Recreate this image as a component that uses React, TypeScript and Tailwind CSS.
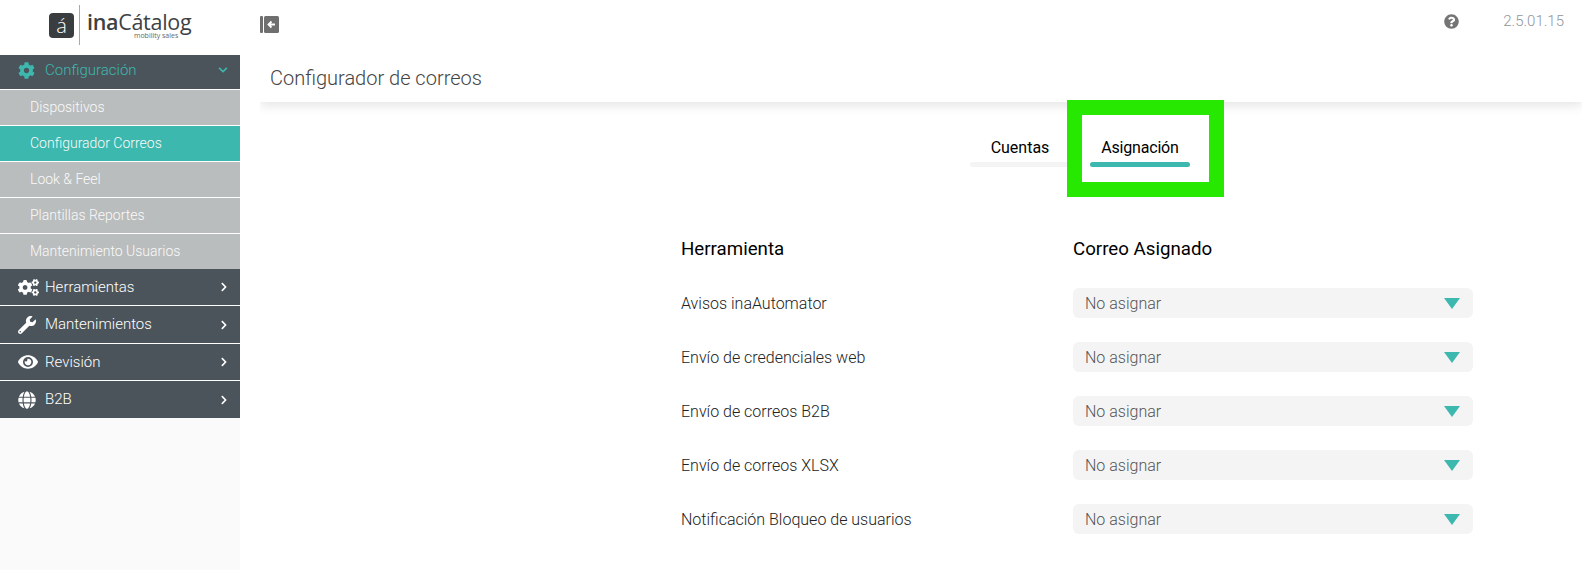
import { FaChevronDown, FaChevronRight, FaCog, FaCogs, FaEye, FaGlobe, FaQuestionCircle, FaWrench } from 'react-icons/fa';

const subItems = ['Dispositivos', 'Configurador Correos', 'Look & Feel', 'Plantillas Reportes', 'Mantenimiento Usuarios'];

const menuItems = [
    { label: 'Herramientas', icon: FaCogs, height: 'h-[36px]', iconSize: 'text-[21px]' },
    { label: 'Mantenimientos', icon: FaWrench, height: 'h-[38px]', iconSize: 'text-[18px]' },
    { label: 'Revisión', icon: FaEye, height: 'h-[37px]', iconSize: 'text-[20px]' },
    { label: 'B2B', icon: FaGlobe, height: 'h-[38px]', iconSize: 'text-[18px]' },
];

const rows = ['Avisos inaAutomator', 'Envío de credenciales web', 'Envío de correos B2B', 'Envío de correos XLSX', 'Notificación Bloqueo de usuarios'];

function Logo() {
    return (
        <div className="h-[55px] bg-white flex items-center pl-[49px] pb-[5px]">
            <div className="w-[25px] h-[25px] mt-[1px] rounded-[4px] bg-[#3a3d3f] text-white flex items-center justify-center text-[20px] font-light font-['Open_Sans',sans-serif]">
                á
            </div>
            <div className="w-px h-[40px] bg-[#a9a9a9] ml-[5px] mr-[7px]" />
            <div className="flex flex-col items-end">
                <div className="text-[#3d4143] text-[21.5px] h-[21px] leading-[21px] tracking-[-0.3px] font-['Open_Sans',sans-serif]">
                    <span className="font-semibold">ina</span>
                    <span>Cátalog</span>
                </div>
                <div className="text-[7px] h-[6px] leading-[6px] text-[#666] mt-[1px] mr-[13px] font-['Open_Sans',sans-serif]">mobility sales</div>
            </div>
        </div>
    );
}

function Sidebar() {
    return (
        <aside className="w-[240px] shrink-0 bg-[#fafafa] min-h-[570px]">
            <Logo />
            <div className="h-[34px] pb-[4px] bg-[#4c545b] text-[#3cb8ae] flex items-center pl-[18px] pr-[12px] text-[15px] font-light">
                <FaCog className="text-[17px] mr-[10px]" />
                <span className="flex-1">Configuración</span>
                <FaChevronDown className="text-[10px]" />
            </div>
            {subItems.map((item, i) => (
                <div
                    key={item}
                    className={`h-[36px] border-t border-white flex items-center pl-[30px] text-[14px] font-light text-[#fafafa] ${i === 1 ? 'bg-[#3cb8ae]' : 'bg-[#babdbd]'}`}
                >
                    {item}
                </div>
            ))}
            <div>
                {menuItems.map((item, i) => {
                    const Icon = item.icon;
                    return (
                        <div
                            key={item.label}
                            className={`${item.height} bg-[#4c545b] text-white flex items-center pr-[11px] text-[15px] font-light ${i > 0 ? 'border-t border-white' : ''}`}
                        >
                            <div className="w-[45px] pl-[18px] flex items-center">
                                <Icon className={item.iconSize} />
                            </div>
                            <span className="flex-1">{item.label}</span>
                            <FaChevronRight className="text-[10px]" />
                        </div>
                    );
                })}
            </div>
        </aside>
    );
}

function ToggleIcon() {
    return (
        <svg width="19" height="19" viewBox="0 0 19 19" className="text-[#6f6f6f]">
            <rect x="0" y="1" width="3" height="17" rx="1" fill="currentColor" />
            <rect x="4" y="1" width="15" height="17" rx="1.5" fill="currentColor" />
            <path d="M15 9.5H8.5M11.5 6.5l-3 3 3 3" stroke="#fff" strokeWidth="1.8" fill="none" />
        </svg>
    );
}

function SelectBox() {
    return (
        <div className="w-[400px] h-[30px] rounded-[6px] bg-[#f4f4f4] flex items-center justify-between pl-[12px] pr-[13px] text-[16px] font-light text-[#555]">
            <span className="pt-[2px]">No asignar</span>
            <div className="w-0 h-0 border-l-[8px] border-r-[8px] border-t-[11px] border-l-transparent border-r-transparent border-t-[#3cb8ae]" />
        </div>
    );
}

export default function App() {
    return (
        <div className="flex h-[570px] overflow-hidden bg-white font-['Roboto',sans-serif]">
            <Sidebar />
            <main className="flex-1 min-w-0">
                <div className="ml-[20px] h-[102px] [clip-path:inset(0_0_-20px_0)] shadow-[0_4px_10px_rgba(0,0,0,0.1)]">
                    <div className="h-[55px] flex items-start justify-between">
                        <div className="mt-[15px]">
                            <ToggleIcon />
                        </div>
                        <div className="flex items-center mt-[10px] pr-[18px]">
                            <FaQuestionCircle className="text-[15px] text-[#757575] mr-[44px]" />
                            <span className="text-[15px] font-light text-[#8f959b]">2.5.01.15</span>
                        </div>
                    </div>
                    <h1 className="pl-[10px] text-[20px] leading-[46px] font-light text-[#444]">Configurador de correos</h1>
                </div>

                <div className="relative ml-[730px] mt-[31px] w-[220px] flex gap-[20px] text-[16px] text-black">
                    <div className="w-[100px] text-center">
                        <div className="h-[29px] leading-[29px]">Cuentas</div>
                        <div className="h-[5px] rounded-full bg-[#f4f4f4]" />
                    </div>
                    <div className="w-[100px] text-center">
                        <div className="h-[29px] leading-[29px] tracking-[-0.2px]">Asignación</div>
                        <div className="h-[5px] rounded-full bg-[#3cb8ae]" />
                    </div>
                    <div className="absolute left-[97px] top-[-33px] w-[157px] h-[97px] border-[15px] border-[#27e800]" />
                </div>

                <div className="ml-[441px] mt-[69px]">
                    <div className="flex h-[26px] text-[18.72px] font-normal text-black items-center">
                        <div className="w-[392px]">Herramienta</div>
                        <div>Correo Asignado</div>
                    </div>
                    <div className="mt-[26px] flex flex-col gap-[24px]">
                        {rows.map((row) => (
                            <div key={row} className="flex items-center text-[16px] font-light text-[#222]">
                                <div className="w-[392px] pt-[2px]">{row}</div>
                                <SelectBox />
                            </div>
                        ))}
                    </div>
                </div>
            </main>
        </div>
    );
}
